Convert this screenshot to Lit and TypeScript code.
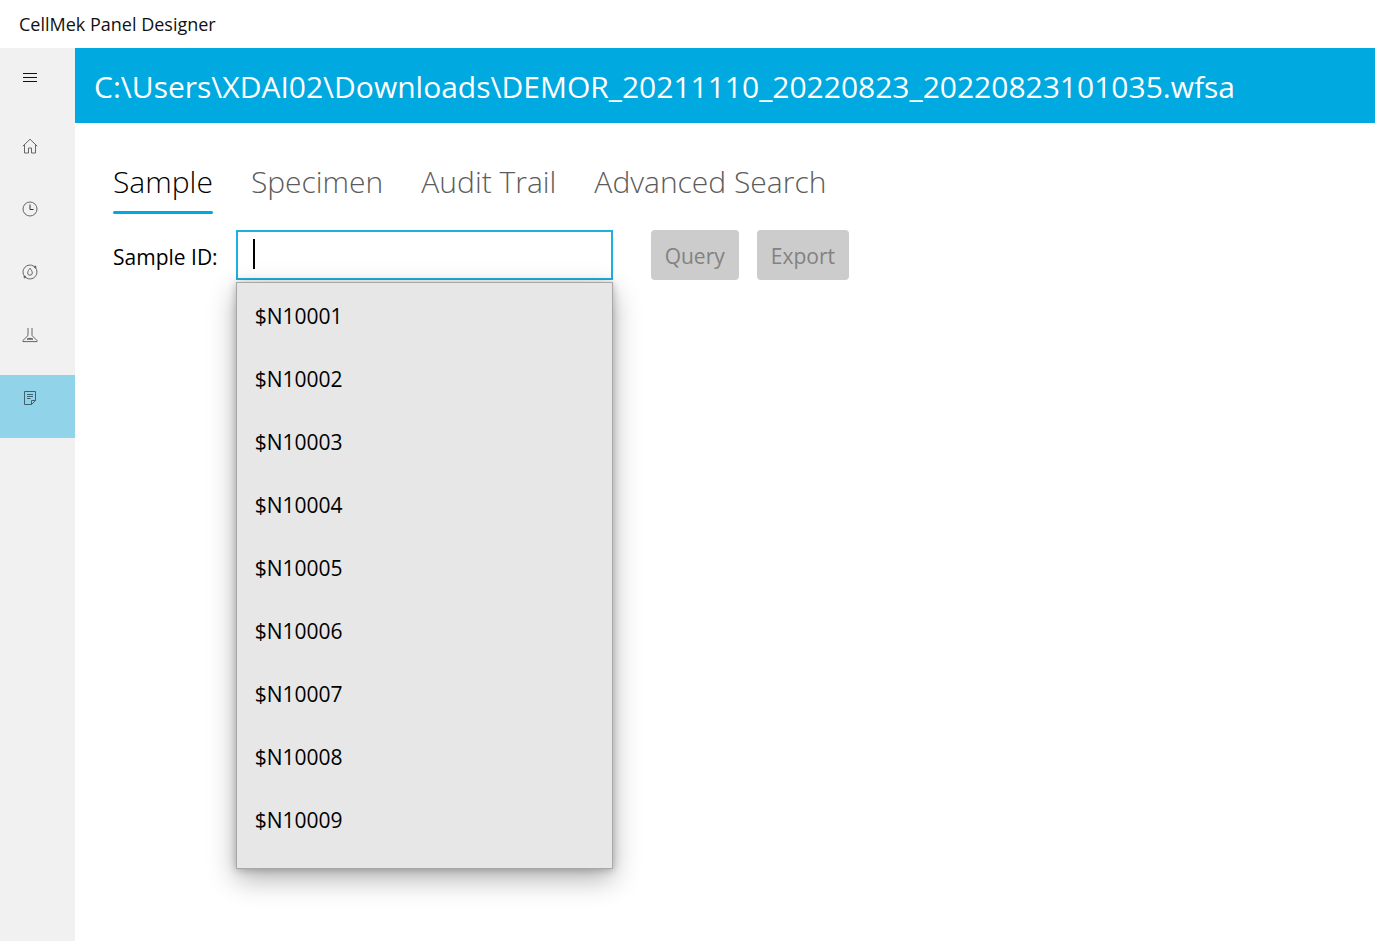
import { LitElement, html, css, svg } from "lit";
import { customElement, state } from "lit/decorators.js";
import { classMap } from "lit/directives/class-map.js";

const icons = {
  menu: svg`<path d="M1 4.5h14M1 8.5h14M1 12.5h14" stroke="#111"/>`,
  home: svg`<path d="M.8 8.2 8 1.2l7.200 7M2.500 6.800v8.200h4v-5h3v5h4V6.800"/>`,
  recent: svg`<circle cx="8" cy="8" r="7"/><path d="M8 3.500v5h3.500" stroke="#333"/>`,
  reagent: svg`<path d="M2.600 12.500A7 7 0 0 1 12 2.300M13.400 3.500A7 7 0 0 1 4 13.700"/><circle cx="13.200" cy="3" r=".9" fill="#555"/><circle cx="2.800" cy="13" r=".9" fill="#555"/><path d="M8 4.200c1.400 2 2.300 3.200 2.300 4.700a2.300 2.300 0 0 1-4.600 0C5.700 7.400 6.600 6.200 8 4.200z"/>`,
  flask: svg`<path d="M6 1v7.500L.9 13.600v1h14.200v-1L10 8.500V1"/><path d="M5 12.200c1.500-1.200 4.500-1.200 6 0z" fill="#666"/>`,
  report: svg`<path d="M2.500 1.500h11v9l-4 4h-7zM9.500 14.500v-4h4" stroke="#3f606d"/><path d="M5 4.500h6M5 6.500h6M5 8.500h3.500" stroke="#3f606d"/>`,
};

const sections = [
  { id: "home", label: "Home", icon: icons.home },
  { id: "recent", label: "Recent", icon: icons.recent },
  { id: "reagent", label: "Reagents", icon: icons.reagent },
  { id: "flask", label: "Preparation", icon: icons.flask },
  { id: "report", label: "Reports", icon: icons.report },
];

const tabs = ["Sample", "Specimen", "Audit Trail", "Advanced Search"];

const sampleIds = Array.from({ length: 9 }, (_, i) => `$N${10001 + i}`);

const drawIcon = (shape: unknown) =>
  html`<svg class="icon" viewBox="0 0 16 16" aria-hidden="true">${shape}</svg>`;

@customElement("app-root")
export class AppRoot extends LitElement {
  @state() private section = "report";
  @state() private tab = tabs[0];
  @state() private sampleId = "";

  static styles = css`
    :host {
      display: flex;
      flex-direction: column;
      min-height: 100vh;
      background: #fff;
      color: #111;
      font-family: "Open Sans", "Noto Sans", sans-serif;
    }
    * {
      box-sizing: border-box;
    }
    button,
    input {
      margin: 0;
      padding: 0;
      border: 0;
      background: none;
      font: inherit;
      color: inherit;
    }
    .title {
      height: 48px;
      padding: 0 19px;
      font-size: 18px;
      line-height: 48px;
    }
    .body {
      flex: 1;
      display: grid;
      grid-template-columns: 75px minmax(0, 1fr);
    }
    .sidebar {
      background: #f1f1f1;
      padding-top: 6px;
    }
    .nav {
      display: flex;
      flex-direction: column;
      padding-top: 6px;
    }
    .nav-item {
      display: flex;
      align-items: flex-start;
      width: 100%;
      height: 63px;
      padding: 15px 22px;
    }
    .nav-item.active {
      background: #91d3e9;
    }
    .icon {
      width: 16px;
      height: 16px;
      fill: none;
      stroke: #666;
      stroke-width: 1;
    }
    .path {
      margin: 0;
      padding: 2px 19px 0;
      background: #00a9e0;
      color: #fff;
      font-size: 30px;
      font-weight: 400;
      line-height: 73px;
      white-space: nowrap;
      overflow: hidden;
    }
    .content {
      padding: 37px 38px;
    }
    .tabs {
      display: flex;
      gap: 38px;
    }
    .tab {
      padding-bottom: 8px;
      font-size: 30px;
      font-weight: 300;
      line-height: 44px;
      color: #5c5c5c;
      white-space: nowrap;
    }
    .tab::after {
      content: "";
      display: block;
      height: 3px;
      border-radius: 2px;
      margin-top: 7px;
    }
    .tab.active {
      color: #000;
    }
    .tab.active::after {
      background: #00a9e0;
    }
    .query {
      display: flex;
      align-items: center;
      margin-top: 8px;
      font-size: 21px;
      line-height: 30px;
    }
    .query label {
      padding-top: 4px;
      margin-right: 18px;
      color: #000;
      white-space: nowrap;
    }
    .combo {
      position: relative;
      width: 377px;
    }
    .field {
      display: block;
      width: 100%;
      height: 50px;
      padding: 0 16px;
      border: 2px solid #1fb0dc;
      outline: none;
      caret-color: transparent;
    }
    .caret {
      position: absolute;
      left: 17px;
      top: 9px;
      width: 2px;
      height: 30px;
      background: #000;
    }
    .options {
      position: absolute;
      top: 52px;
      left: 0;
      right: 0;
      margin: 0;
      padding: 1px 0 17px;
      list-style: none;
      background: #e7e7e7;
      border: 1px solid #a8a8a8;
      box-shadow: 0 10px 26px rgba(0, 0, 0, 0.3), 0 1px 8px rgba(0, 0, 0, 0.24);
    }
    .option {
      display: block;
      width: 100%;
      height: 63px;
      padding: 0 18px;
      text-align: left;
      color: #000;
    }
    .actions {
      display: flex;
      gap: 18px;
      margin-left: 38px;
    }
    .action {
      height: 50px;
      padding: 2px 14px 0;
      border-radius: 4px;
      background: #ccc;
      color: #828282;
    }
  `;

  render() {
    return html`
      <header class="title">CellMek Panel Designer</header>
      <div class="body">
        <aside class="sidebar">
          <button class="nav-item" aria-label="Menu">${drawIcon(icons.menu)}</button>
          <nav class="nav">
            ${sections.map(
              (s) => html`<button
                class=${classMap({ "nav-item": true, active: s.id === this.section })}
                aria-label=${s.label}
                @click=${() => (this.section = s.id)}
              >${drawIcon(s.icon)}</button>`
            )}
          </nav>
        </aside>
        <main>
          <h1 class="path">C:\\Users\\XDAI02\\Downloads\\DEMOR_20211110_20220823_20220823101035.wfsa</h1>
          <div class="content">
            <div class="tabs" role="tablist">
              ${tabs.map(
                (t) => html`<button
                  class=${classMap({ tab: true, active: t === this.tab })}
                  role="tab"
                  aria-selected=${t === this.tab}
                  @click=${() => (this.tab = t)}
                >${t}</button>`
              )}
            </div>
            <div class="query">
              <label for="sample-id">Sample ID:</label>
              <div class="combo">
                <input
                  id="sample-id"
                  class="field"
                  type="text"
                  autocomplete="off"
                  .value=${this.sampleId}
                  @input=${(e: Event) => (this.sampleId = (e.target as HTMLInputElement).value)}
                />
                ${this.sampleId ? "" : html`<span class="caret"></span>`}
                <ul class="options">
                  ${sampleIds.map(
                    (id) => html`<li><button class="option" @click=${() => (this.sampleId = id)}>${id}</button></li>`
                  )}
                </ul>
              </div>
              <div class="actions">
                <button class="action" disabled>Query</button>
                <button class="action" disabled>Export</button>
              </div>
            </div>
          </div>
        </main>
      </div>
    `;
  }
}
